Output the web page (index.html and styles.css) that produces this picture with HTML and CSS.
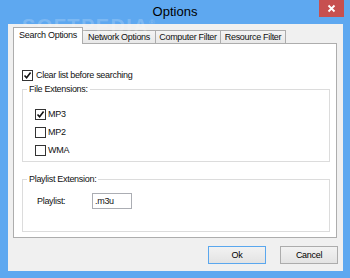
FILE: index.html
```html
<!DOCTYPE html>
<html lang="en">
<head>
    <meta charset="UTF-8">
    <title>Options</title>
    <link rel="stylesheet" href="styles.css">
</head>
<body>
    <div class="window">
        <div class="titlebar">
            <span class="title">Options</span>
            <button class="close" aria-label="Close">
                <svg width="9" height="9" viewBox="0 0 9 9"><path d="M1.5 1.5 L7.5 7.5 M7.5 1.5 L1.5 7.5" stroke="#fff" stroke-width="1.8" fill="none"/></svg>
            </button>
        </div>
        <div class="client">
            <div class="tabs">
                <div class="tab active tab-search">Search Options</div>
                <div class="tab tab-network">Network Options</div>
                <div class="tab tab-computer">Computer Filter</div>
                <div class="tab tab-resource">Resource Filter</div>
            </div>
            <div class="panel">
                <label class="check-row clear-row">
                    <span class="box"><svg width="9" height="9" viewBox="0 0 9 9"><path d="M1.5 4.5 L3.6 6.8 L7.6 1.6" stroke="#111" stroke-width="1.6" fill="none"/></svg></span>
                    Clear list before searching
                </label>
                <fieldset class="group group-ext">
                    <legend>File Extensions:</legend>
                    <label class="check-row ext-row">
                        <span class="box"><svg width="9" height="9" viewBox="0 0 9 9"><path d="M1.5 4.5 L3.6 6.8 L7.6 1.6" stroke="#111" stroke-width="1.6" fill="none"/></svg></span>
                        MP3
                    </label>
                    <label class="check-row ext-row"><span class="box"></span>MP2</label>
                    <label class="check-row ext-row"><span class="box"></span>WMA</label>
                </fieldset>
                <fieldset class="group group-playlist">
                    <legend>Playlist Extension:</legend>
                    <div class="field-row">
                        <span class="field-label">Playlist:</span>
                        <input class="field-input" type="text" value=".m3u">
                    </div>
                </fieldset>
            </div>
            <div class="buttons">
                <button class="btn btn-default">Ok</button>
                <button class="btn">Cancel</button>
            </div>
        </div>
        <div class="watermark">SOFTPEDIA<sup>®</sup></div>
    </div>
</body>
</html>
```

FILE: styles.css
```css
body {
    margin: 0;
    font-family: "Liberation Sans", Arial, sans-serif;
    font-size: 9px;
    letter-spacing: -0.3px;
    color: #111;
}
.window {
    position: relative;
    width: 350px;
    height: 278px;
    background-color: #5ea8f0;
    display: flex;
    flex-direction: column;
    overflow: hidden;
}
.titlebar {
    height: 24px;
    display: grid;
    grid-template-columns: 1fr auto 1fr;
    align-items: start;
}
.title {
    grid-column: 2;
    font-size: 13px;
    letter-spacing: 0;
    line-height: 24px;
    color: #000;
}
.close {
    grid-column: 3;
    justify-self: end;
    width: 25px;
    height: 17px;
    margin-right: 6px;
    padding: 0;
    border: none;
    background-color: #c75050;
    display: flex;
    align-items: center;
    justify-content: center;
}
.client {
    flex: 1;
    margin: 0 7px 7px 8px;
    padding: 3px 6px 0 5px;
    background-color: #f0f0f0;
    display: flex;
    flex-direction: column;
}
.tabs {
    height: 16px;
    display: flex;
    align-items: flex-end;
}
.tab {
    box-sizing: border-box;
    height: 13px;
    margin-left: -1px;
    border: 1px solid #acacac;
    border-bottom: none;
    background: linear-gradient(#f4f4f4, #e8e8e8);
    text-align: center;
    line-height: 12px;
    white-space: nowrap;
}
.tab.active {
    position: relative;
    z-index: 1;
    height: 17px;
    margin-left: 0;
    margin-bottom: -1px;
    background: #fff;
    line-height: 15px;
}
.tab-search { width: 70px; }
.tab-network { width: 74px; }
.tab-computer { width: 66px; }
.tab-resource { width: 66px; }
.panel {
    box-sizing: border-box;
    height: 195px;
    padding: 25px 6px 0 8px;
    background-color: #fff;
    border: 1px solid #adadad;
}
.check-row {
    display: flex;
    align-items: center;
    gap: 3px;
}
.clear-row { height: 12px; }
.box {
    box-sizing: border-box;
    width: 11px;
    height: 11px;
    border: 1px solid #333;
    background-color: #fff;
    display: flex;
    align-items: center;
    justify-content: center;
}
.group {
    margin: 0;
    padding: 10px 0 2px 0;
    border: 1px solid #dcdcdc;
    min-inline-size: 0;
}
.group legend {
    margin-left: 4px;
    padding: 0 2px;
    line-height: 11px;
}
.group-ext { margin-top: 3px; }
.group-playlist {
    margin-top: 12px;
    padding: 8px 0 22px 0;
}
.ext-row {
    height: 18px;
    margin-left: 12px;
    gap: 2px;
}
.field-row {
    height: 16px;
    margin-left: 14px;
    display: flex;
    align-items: center;
}
.field-label { width: 55px; }
.field-input {
    box-sizing: border-box;
    width: 40px;
    height: 16px;
    padding: 0 2px;
    border: 1px solid #abadb3;
    font: inherit;
    letter-spacing: inherit;
    color: #111;
    outline: none;
}
.buttons {
    margin-top: 8px;
    margin-right: -1px;
    display: flex;
    justify-content: flex-end;
    gap: 14px;
}
.btn {
    box-sizing: border-box;
    width: 58px;
    height: 18px;
    padding: 0;
    border: 1px solid #acacac;
    background: linear-gradient(#f2f2f2, #e3e3e3);
    font: inherit;
    letter-spacing: inherit;
    color: #000;
}
.btn-default { border-color: #5aa7ee; }
/* watermark lies over the title bar */
.watermark {
    position: absolute;
    left: 22px;
    top: 15px;
    font-weight: bold;
    font-size: 20px;
    letter-spacing: 1.4px;
    color: rgba(255, 255, 255, 0.2);
    pointer-events: none;
}
.watermark sup { font-size: 8px; }
```
